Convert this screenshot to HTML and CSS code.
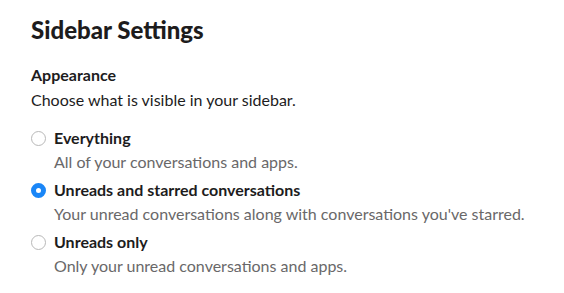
FILE: index.html
```html
<!DOCTYPE html>
<html>
<head>
<meta charset="utf-8">
<link rel="stylesheet" href="styles.css">
</head>
<body>
<div class="page">
  <h1 class="title">Sidebar Settings</h1>
  <h2 class="section">Appearance</h2>
  <p class="intro">Choose what is visible in your sidebar.</p>
  <div class="options">
    <label class="option">
      <span class="radio"></span>
      <span class="text">
        <span class="label">Everything</span>
        <span class="desc">All of your conversations and apps.</span>
      </span>
    </label>
    <label class="option">
      <span class="radio checked"></span>
      <span class="text">
        <span class="label">Unreads and starred conversations</span>
        <span class="desc">Your unread conversations along with conversations you've starred.</span>
      </span>
    </label>
    <label class="option">
      <span class="radio"></span>
      <span class="text">
        <span class="label">Unreads only</span>
        <span class="desc">Only your unread conversations and apps.</span>
      </span>
    </label>
  </div>
</div>
</body>
</html>
```
FILE: styles.css
```css
html, body {
  margin: 0;
  padding: 0;
  background: #ffffff;
}
body {
  font-family: Lato, "Liberation Sans", sans-serif;
  color: #1d1c1d;
}
.page {
  padding: 15px 31px 0 31px;
}
.title {
  margin: 0;
  font-size: 24px;
  font-weight: 900;
  line-height: 30px;
  color: #1d1c1d;
}
.section {
  margin: 18px 0 0 0;
  font-size: 16px;
  font-weight: 700;
  line-height: 24px;
}
.intro {
  margin: 1px 0 0 0;
  font-size: 16px;
  line-height: 24px;
  color: #1d1c1d;
}
.options {
  margin-top: 14px;
  display: flex;
  flex-direction: column;
  gap: 4px;
}
.option {
  display: flex;
  align-items: flex-start;
  gap: 8px;
}
.radio {
  flex: none;
  width: 15px;
  height: 15px;
  box-sizing: border-box;
  border: 1px solid #b8b8b8;
  border-radius: 50%;
  margin-top: 5px;
  background: #fff;
}
.radio.checked {
  border: 5px solid #1a86f7;
  background: #fff;
}
.text {
  display: flex;
  flex-direction: column;
}
.label {
  font-size: 16px;
  font-weight: 700;
  line-height: 24px;
}
.desc {
  font-size: 16px;
  line-height: 24px;
  color: #696869;
}
```
